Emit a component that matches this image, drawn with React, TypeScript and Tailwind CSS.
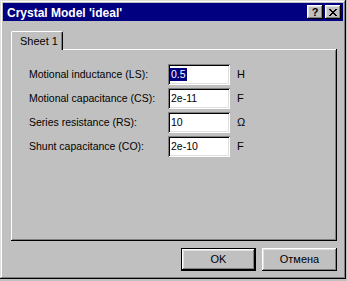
const FIELDS = [
  { label: 'Motional inductance (LS):', value: '0.5', unit: 'H', selected: true },
  { label: 'Motional capacitance (CS):', value: '2e-11', unit: 'F' },
  { label: 'Series resistance (RS):', value: '10', unit: 'Ω' },
  { label: 'Shunt capacitance (CO):', value: '2e-10', unit: 'F' },
]

// win95 bevels
const RAISED = 'shadow-[inset_-1px_-1px_#000,inset_1px_1px_#fff,inset_-2px_-2px_#808080,inset_2px_2px_#dfdfdf]'
const SUNKEN = 'shadow-[inset_1px_1px_#808080,inset_-1px_-1px_#fff,inset_2px_2px_#000,inset_-2px_-2px_#dfdfdf]'

function TitleButton({ children }: { children: React.ReactNode }) {
  return (
    <div className={`w-[16px] h-[14px] bg-[#c0c0c0] flex items-center justify-center text-black ${RAISED}`}>
      {children}
    </div>
  )
}

export default function App() {
  return (
    <div
      className="w-[347px] h-[281px] bg-[#c0c0c0] overflow-hidden text-black"
      style={{ fontFamily: '"Liberation Sans", Arial, sans-serif' }}
    >
      <div className="w-[346px] h-[279px] bg-[#c0c0c0] p-[3px] flex flex-col shadow-[inset_-1px_-1px_#000,inset_1px_1px_#dfdfdf,inset_-2px_-2px_#808080,inset_2px_2px_#fff]">
        {/* title bar */}
        <div className="h-[18px] bg-[#000080] flex items-center pl-[4px] pr-[2px]">
          <span className="text-white font-bold text-[12px] leading-none flex-1 pt-[1px]">Crystal Model 'ideal'</span>
          <div className="flex gap-[2px]">
            <TitleButton>
              <span className="font-bold text-[11px] leading-none">?</span>
            </TitleButton>
            <TitleButton>
              <svg width="8" height="7" viewBox="0 0 8 7" shapeRendering="crispEdges">
                <path d="M0 0h2v1h-2zM6 0h2v1h-2zM1 1h2v1h-2zM5 1h2v1h-2zM2 2h4v1h-4zM3 3h2v1h-2zM2 4h4v1h-4zM1 5h2v1h-2zM5 5h2v1h-2zM0 6h2v1h-2zM6 6h2v1h-2z" fill="#000" />
              </svg>
            </TitleButton>
          </div>
        </div>

        {/* tab control */}
        <div className="pl-[8px] pt-[10px] flex flex-col">
          <div className="relative z-10 flex">
            <div className="w-[52px] h-[19px] bg-[#c0c0c0] border-t border-l border-white border-r border-r-black rounded-tl-[2px] rounded-tr-[2px] shadow-[inset_-1px_0_#808080] flex items-start pl-[8px] pt-[3px] text-[11px] leading-[13px]">
              Sheet 1
            </div>
          </div>
          <div className="-mt-[1px] w-[326px] h-[192px] pl-[18px] pt-[15px] shadow-[inset_-1px_-1px_#000,inset_1px_1px_#fff,inset_-2px_-2px_#808080]">
            <div className="flex flex-col gap-[3px]">
              {FIELDS.map(f => (
                <div key={f.label} className="flex items-center h-[21px]">
                  <span className="w-[139px] text-[10.5px] leading-none">{f.label}</span>
                  <div className={`w-[62px] h-[21px] bg-white flex items-center pl-[3px] text-[10.5px] leading-none ${SUNKEN}`}>
                    {f.selected ? (
                      <span className="bg-[#000080] text-white px-[1px] -ml-[1px] leading-[13px]">{f.value}</span>
                    ) : (
                      <span>{f.value}</span>
                    )}
                  </div>
                  <span className="ml-[7px] text-[11px] leading-none">{f.unit}</span>
                </div>
              ))}
            </div>
          </div>
        </div>

        {/* buttons */}
        <div className="flex justify-end gap-[6px] mt-[7px] pr-[6px]">
          <div className="w-[75px] h-[23px] border border-black bg-[#c0c0c0]">
            <div className={`w-full h-full flex items-center justify-center text-[11px] ${RAISED}`}>OK</div>
          </div>
          <div className={`w-[75px] h-[23px] bg-[#c0c0c0] flex items-center justify-center text-[11px] ${RAISED}`}>
            Отмена
          </div>
        </div>
      </div>
    </div>
  )
}
